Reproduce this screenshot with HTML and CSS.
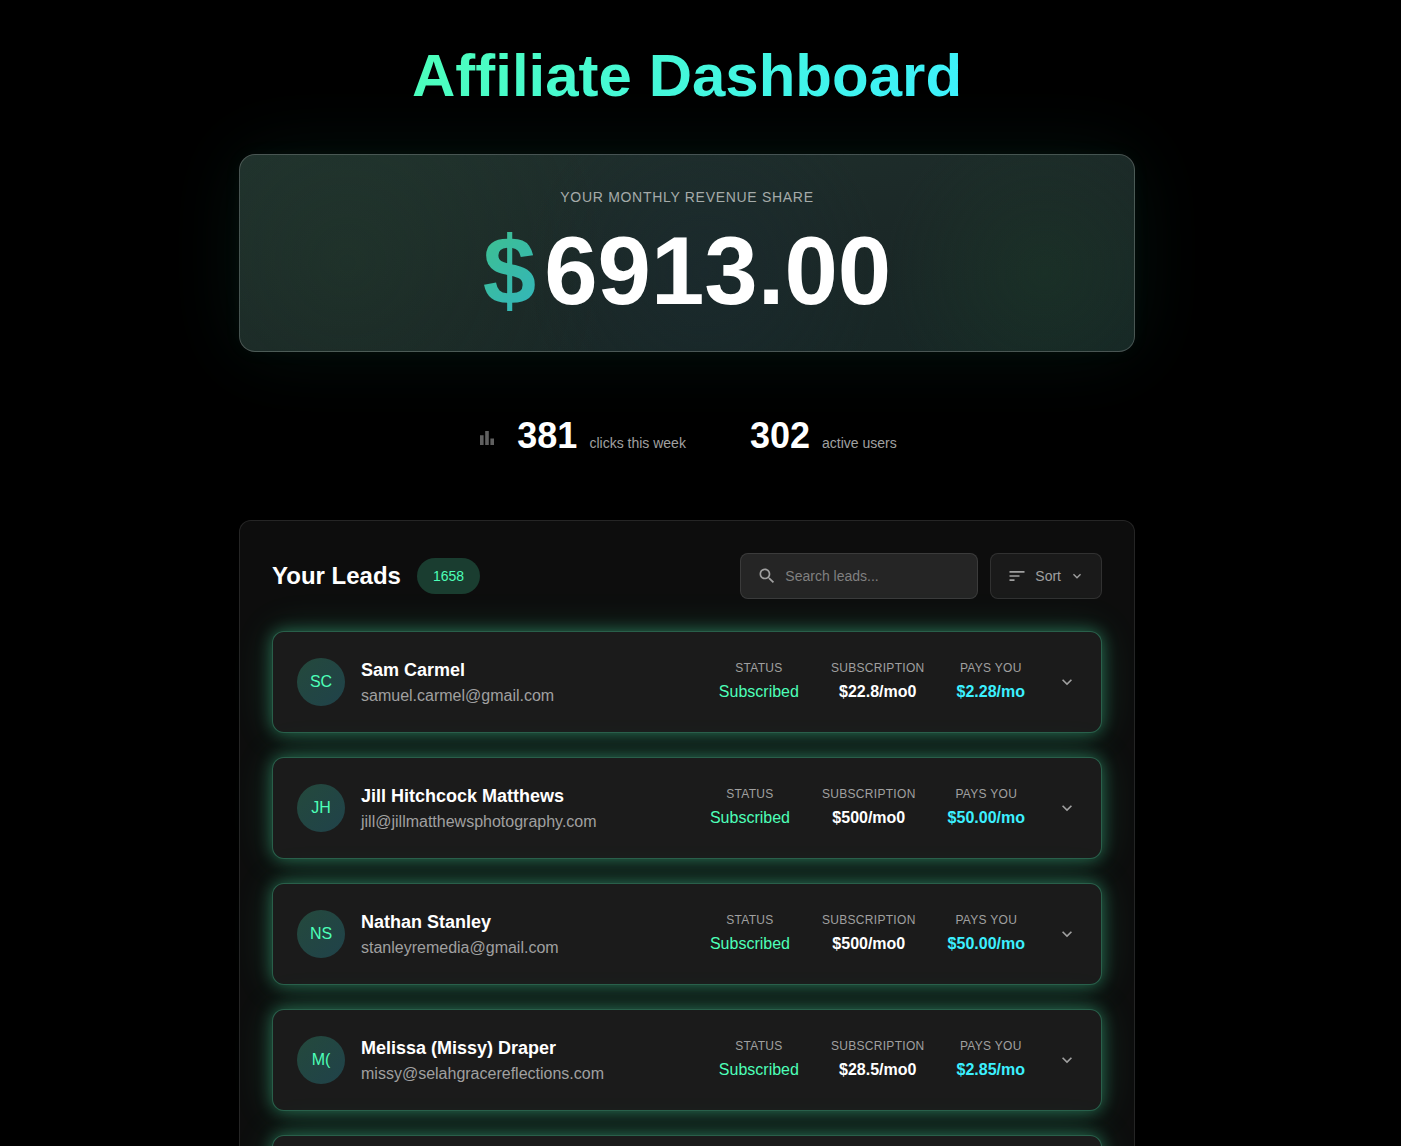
FILE: index.html
```html
<!DOCTYPE html>
<html lang="en">
<head>
<meta charset="utf-8">
<meta name="viewport" content="width=device-width, initial-scale=1">
<title>Affiliate Dashboard</title>
<link rel="stylesheet" href="styles.css">
</head>
<body>
<svg class="sprite" aria-hidden="true">
  <symbol id="chevron" viewBox="0 0 24 24"><path d="M16.59 8.59 12 13.17 7.41 8.59 6 10l6 6 6-6z"/></symbol>
</svg>
<main class="page">
  <h1 class="title">Affiliate Dashboard</h1>

  <section class="revenue">
    <p class="revenue-label">Your monthly revenue share</p>
    <p class="revenue-amount"><span class="currency">$</span><span>6913.00</span></p>
  </section>

  <section class="stats">
    <div class="stat">
      <svg class="stat-icon" viewBox="0 0 24 24" aria-hidden="true"><path d="M3 9.2h3.6V19H3zM8.2 5h3.6v14H8.2zM13.4 12.5H17V19h-3.6z"/></svg>
      <p class="stat-text"><span class="stat-number">381</span><span class="stat-label">clicks this week</span></p>
    </div>
    <div class="stat">
      <p class="stat-text"><span class="stat-number">302</span><span class="stat-label">active users</span></p>
    </div>
  </section>

  <section class="leads">
    <header class="leads-header">
      <h2 class="leads-title">Your Leads</h2>
      <span class="count">1658</span>
      <div class="tools">
        <label class="search">
          <svg class="icon" viewBox="0 0 24 24" aria-hidden="true"><path d="M15.5 14h-.79l-.28-.27C15.41 12.59 16 11.11 16 9.5 16 5.91 13.09 3 9.5 3S3 5.91 3 9.5 5.91 16 9.5 16c1.61 0 3.09-.59 4.23-1.57l.27.28v.79l5 4.99L20.49 19l-4.99-5zm-6 0C7.01 14 5 11.99 5 9.5S7.01 5 9.5 5 14 7.01 14 9.5 11.99 14 9.5 14z"/></svg>
          <input class="search-input" type="text" placeholder="Search leads..." aria-label="Search leads">
        </label>
        <button class="sort" type="button">
          <svg class="icon" viewBox="0 0 24 24" aria-hidden="true"><path d="M3 18h6v-2H3v2zM3 6v2h18V6H3zm0 7h12v-2H3v2z"/></svg>
          <span>Sort</span>
          <svg class="icon-small" aria-hidden="true"><use href="#chevron"/></svg>
        </button>
      </div>
    </header>

    <ul class="lead-list">
      <li class="lead">
        <span class="avatar">SC</span>
        <div class="person"><h3 class="name">Sam Carmel</h3><p class="email">samuel.carmel@gmail.com</p></div>
        <dl class="facts">
          <div class="fact"><dt>Status</dt><dd class="status">Subscribed</dd></div>
          <div class="fact"><dt>Subscription</dt><dd class="price">$22.8/mo0</dd></div>
          <div class="fact"><dt>Pays you</dt><dd class="payout">$2.28/mo</dd></div>
        </dl>
        <button class="expand" type="button" aria-label="Show details"><svg class="icon" aria-hidden="true"><use href="#chevron"/></svg></button>
      </li>
      <li class="lead">
        <span class="avatar">JH</span>
        <div class="person"><h3 class="name">Jill Hitchcock Matthews</h3><p class="email">jill@jillmatthewsphotography.com</p></div>
        <dl class="facts">
          <div class="fact"><dt>Status</dt><dd class="status">Subscribed</dd></div>
          <div class="fact"><dt>Subscription</dt><dd class="price">$500/mo0</dd></div>
          <div class="fact"><dt>Pays you</dt><dd class="payout">$50.00/mo</dd></div>
        </dl>
        <button class="expand" type="button" aria-label="Show details"><svg class="icon" aria-hidden="true"><use href="#chevron"/></svg></button>
      </li>
      <li class="lead">
        <span class="avatar">NS</span>
        <div class="person"><h3 class="name">Nathan Stanley</h3><p class="email">stanleyremedia@gmail.com</p></div>
        <dl class="facts">
          <div class="fact"><dt>Status</dt><dd class="status">Subscribed</dd></div>
          <div class="fact"><dt>Subscription</dt><dd class="price">$500/mo0</dd></div>
          <div class="fact"><dt>Pays you</dt><dd class="payout">$50.00/mo</dd></div>
        </dl>
        <button class="expand" type="button" aria-label="Show details"><svg class="icon" aria-hidden="true"><use href="#chevron"/></svg></button>
      </li>
      <li class="lead">
        <span class="avatar">M(</span>
        <div class="person"><h3 class="name">Melissa (Missy) Draper</h3><p class="email">missy@selahgracereflections.com</p></div>
        <dl class="facts">
          <div class="fact"><dt>Status</dt><dd class="status">Subscribed</dd></div>
          <div class="fact"><dt>Subscription</dt><dd class="price">$28.5/mo0</dd></div>
          <div class="fact"><dt>Pays you</dt><dd class="payout">$2.85/mo</dd></div>
        </dl>
        <button class="expand" type="button" aria-label="Show details"><svg class="icon" aria-hidden="true"><use href="#chevron"/></svg></button>
      </li>
      <li class="lead"></li>
    </ul>
  </section>
</main>
</body>
</html>
```
FILE: styles.css
```css
:root {
  --green: #4dffb8;
  --cyan: #3cf0ff;
  --muted: #a0a0a0;
  --line: rgba(255, 255, 255, 0.1);
}

* {
  box-sizing: border-box;
  margin: 0;
  padding: 0;
}

html {
  background: #000;
  scrollbar-width: none;
}

body {
  padding-right: 27px;
  color: #fff;
  font-family: "Liberation Sans", Arial, sans-serif;
  font-size: 16px;
  line-height: 24px;
}

button,
input {
  border: 0;
  background: none;
  color: inherit;
  font: inherit;
}

.sprite {
  display: none;
}

.page {
  display: flex;
  flex-direction: column;
  max-width: 960px;
  margin: 0 auto;
  padding: 40px 32px;
}

.title {
  align-self: center;
  margin-bottom: 42px;
  background: linear-gradient(135deg, var(--green), var(--cyan));
  background-clip: text;
  -webkit-background-clip: text;
  color: transparent;
  font-size: 60px;
  line-height: 72px;
}

/* Revenue card */
.revenue {
  padding: 32px;
  border: 1px solid rgba(255, 255, 255, 0.2);
  border-radius: 16px;
  background:
    radial-gradient(circle at 12% 55%, rgba(36, 64, 44, 0.3), transparent 260px),
    radial-gradient(circle at 52% 60%, rgba(26, 44, 52, 0.4), transparent 180px),
    radial-gradient(circle at 90% 60%, rgba(28, 60, 40, 0.4), transparent 160px),
    linear-gradient(170deg, #20312d, #1b2827 55%, #162625);
  box-shadow: 0 0 20px rgba(77, 255, 184, 0.04), 0 0 80px rgba(77, 240, 200, 0.07);
  text-align: center;
}

.revenue-label {
  margin-bottom: 16px;
  color: #a5abaa;
  font-size: 14px;
  letter-spacing: 0.05em;
  line-height: 20px;
  text-transform: uppercase;
}

.revenue-amount {
  display: flex;
  justify-content: center;
  gap: 8px;
  font-size: 96px;
  font-weight: 700;
  line-height: 96px;
}

.currency {
  background: linear-gradient(135deg, var(--green), var(--cyan));
  background-clip: text;
  -webkit-background-clip: text;
  color: transparent;
  opacity: 0.7;
}

/* Weekly figures */
.stats {
  display: flex;
  justify-content: center;
  gap: 64px;
  padding: 64px 0;
}

.stat {
  display: flex;
  align-items: center;
  gap: 16px;
}

.stat-icon {
  width: 24px;
  height: 24px;
  margin-top: 4px;
  fill: #606060;
}

.stat-text {
  display: flex;
  align-items: baseline;
  gap: 12px;
}

.stat-number {
  font-size: 36px;
  font-weight: 700;
  line-height: 40px;
}

.stat-label {
  color: var(--muted);
  font-size: 14px;
}

/* Leads panel */
.leads {
  padding: 32px;
  border: 1px solid var(--line);
  border-radius: 12px;
  background: #0d0d0d;
}

.leads-header {
  display: flex;
  align-items: center;
  gap: 16px;
  margin-bottom: 32px;
}

.leads-title {
  font-size: 24px;
  line-height: 32px;
}

.count {
  padding: 8px 16px;
  border-radius: 18px;
  background: #1a3d30;
  color: var(--green);
  font-size: 14px;
  line-height: 20px;
}

.tools {
  display: flex;
  gap: 12px;
  margin-left: auto;
  color: var(--muted);
  font-size: 14px;
}

.search,
.sort {
  display: flex;
  align-items: center;
  gap: 8px;
  height: 46px;
  padding: 0 16px;
  border: 1px solid var(--line);
  border-radius: 8px;
}

.search {
  width: 238px;
  background: #252525;
}

.search-input {
  flex: 1;
  min-width: 0;
  outline: 0;
}

.search-input::placeholder {
  color: #808080;
}

.sort {
  background: #1a1a1a;
}

.icon {
  display: block;
  flex: none;
  width: 20px;
  height: 20px;
  fill: currentColor;
}

.icon-small {
  width: 16px;
  height: 16px;
  fill: currentColor;
}

/* Lead rows */
.lead-list {
  display: flex;
  flex-direction: column;
  gap: 24px;
  list-style: none;
}

.lead {
  display: flex;
  align-items: center;
  min-height: 102px;
  padding: 24px;
  border: 1px solid rgba(77, 255, 184, 0.3);
  border-radius: 12px;
  background: #1b1b1b;
  box-shadow:
    0 0 16px rgba(77, 255, 184, 0.36),
    0 0 40px rgba(77, 255, 184, 0.14);
}

.avatar {
  display: grid;
  flex: none;
  place-items: center;
  width: 48px;
  height: 48px;
  margin-right: 16px;
  border-radius: 50%;
  background: linear-gradient(135deg, #24493c, #20424a);
  color: var(--green);
}

.person {
  flex: 1;
  min-width: 0;
}

.name {
  font-size: 18px;
  line-height: 28px;
}

.email {
  color: var(--muted);
}

.facts {
  display: flex;
  gap: 32px;
  margin-right: 32px;
  text-align: center;
}

.fact dt {
  margin-bottom: 4px;
  color: var(--muted);
  font-size: 12px;
  letter-spacing: 0.025em;
  line-height: 16px;
  text-transform: uppercase;
}

.status {
  color: var(--green);
}

.price,
.payout {
  font-weight: 700;
}

.payout {
  color: var(--cyan);
}

.expand {
  color: var(--muted);
}
```
